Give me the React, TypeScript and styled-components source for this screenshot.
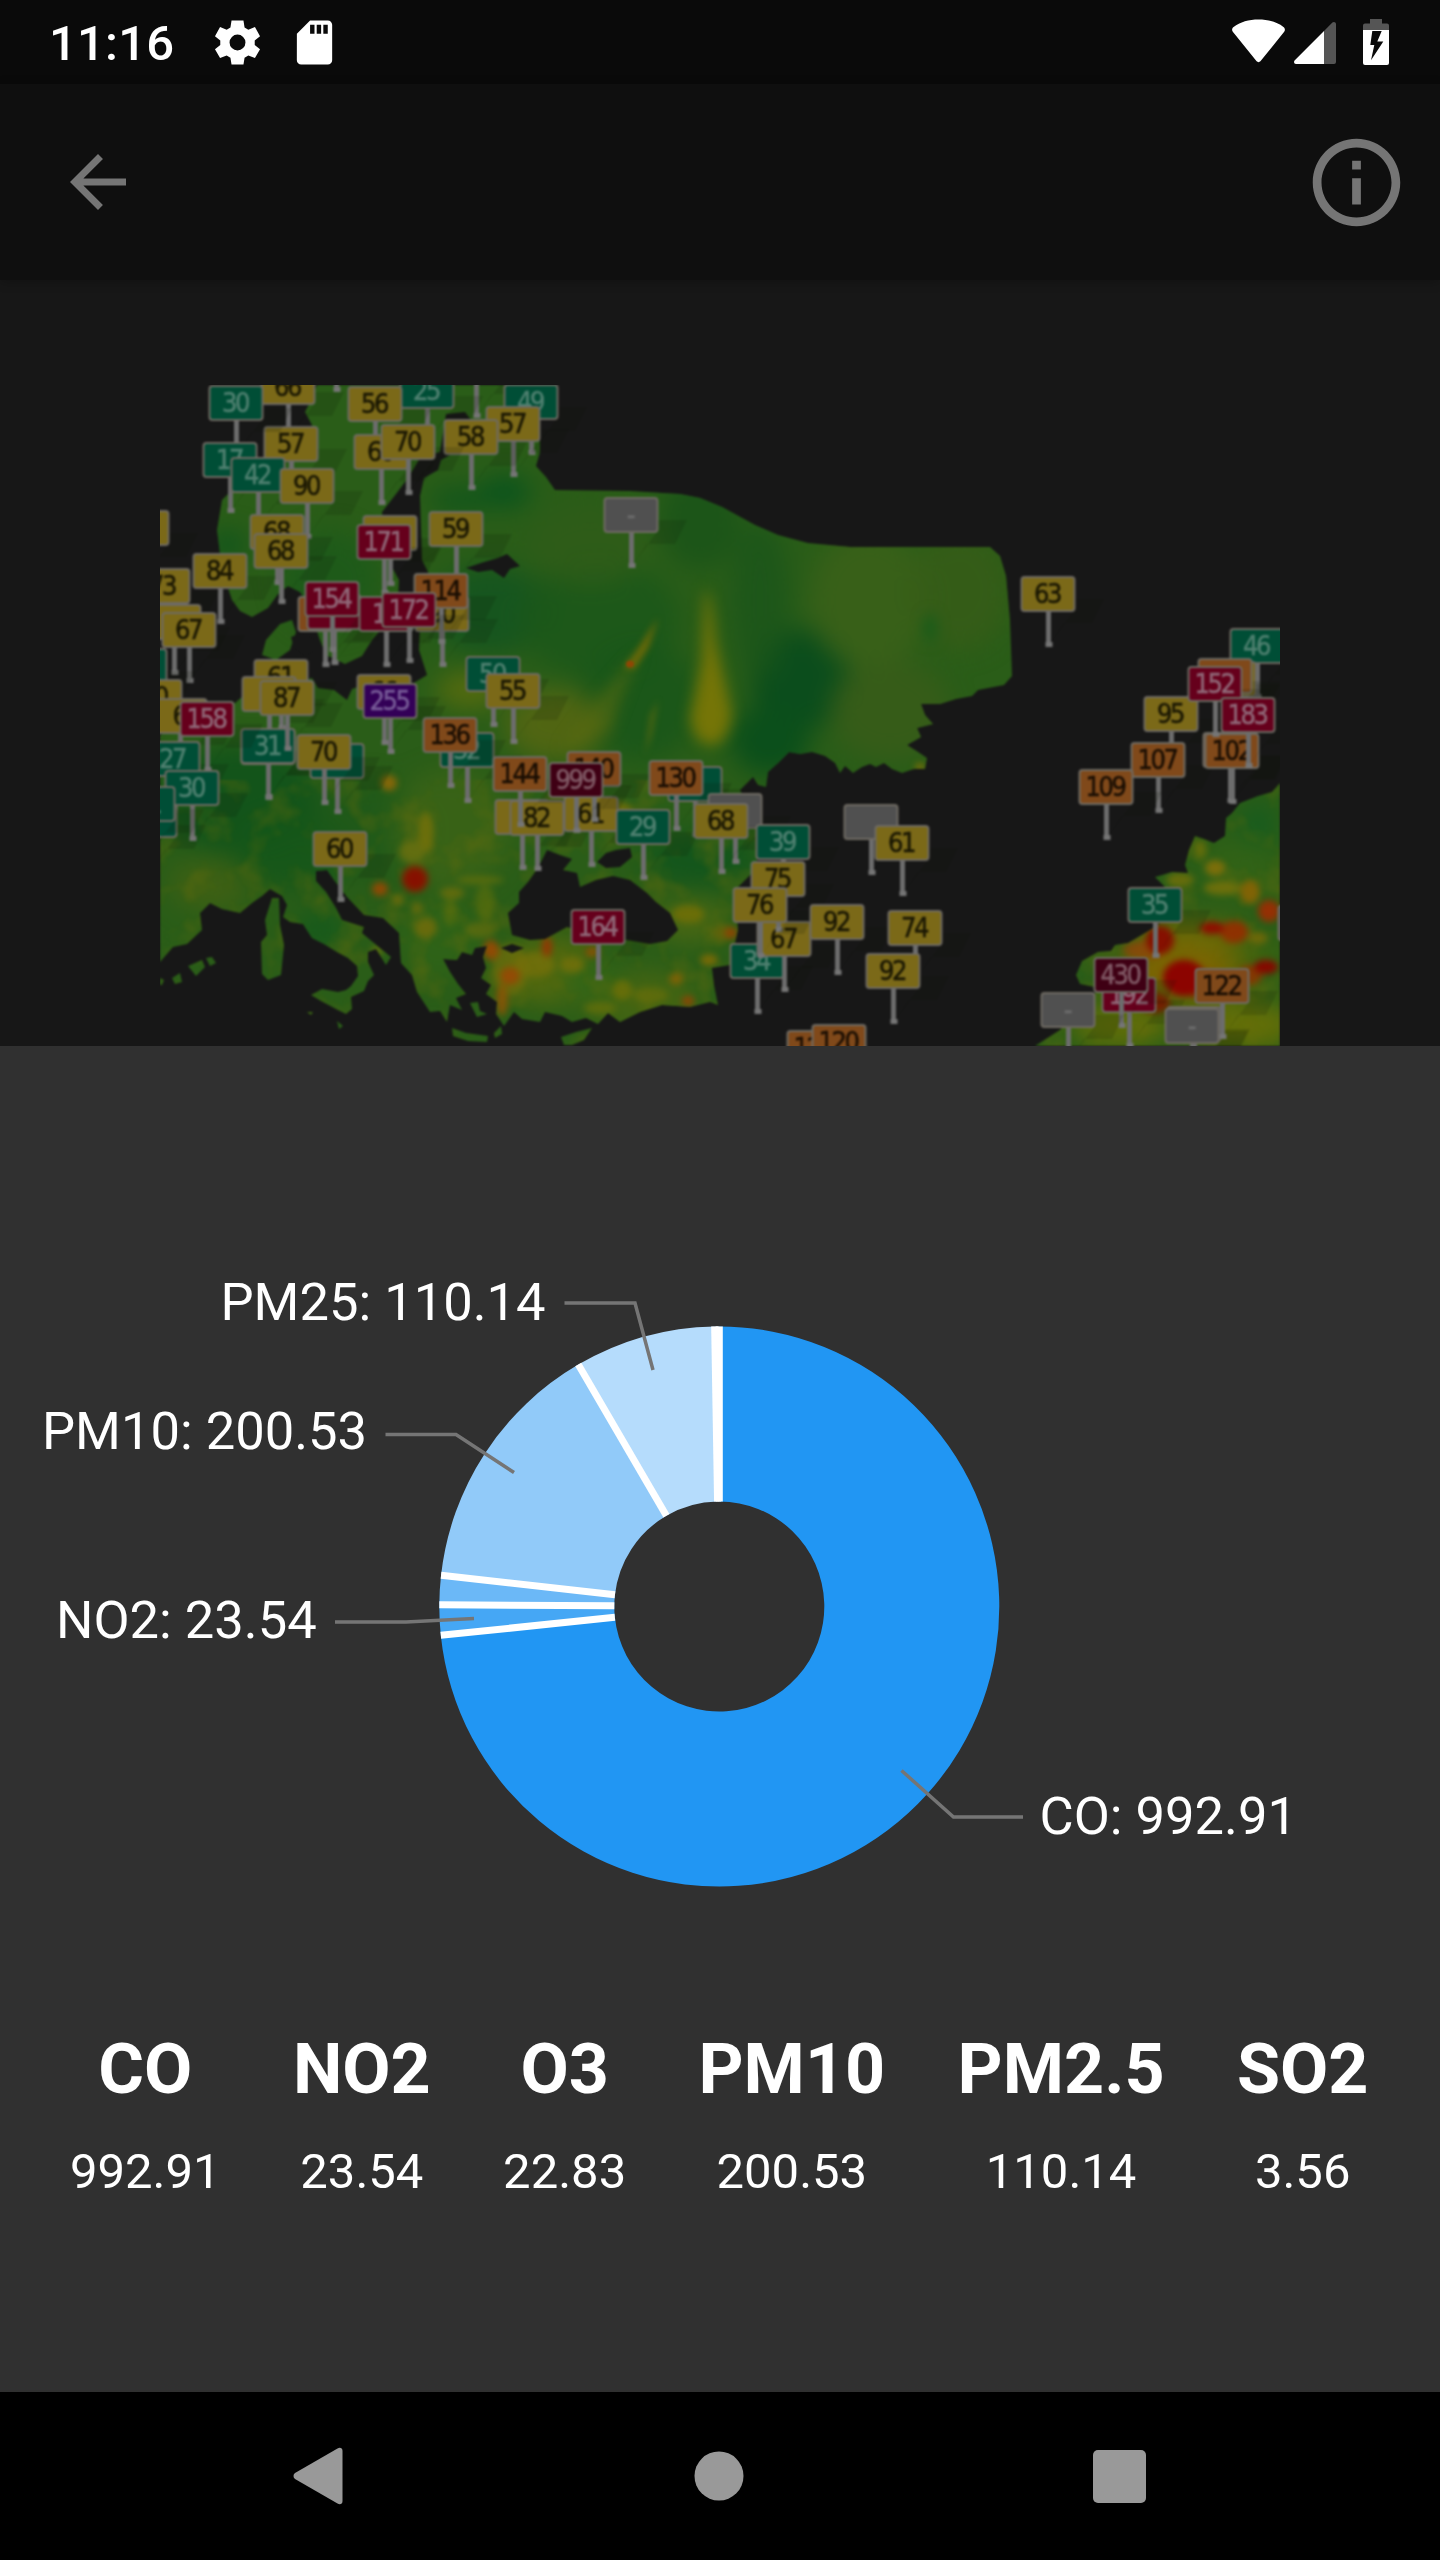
import React from "react";
import styled, { createGlobalStyle } from "styled-components";

const GlobalStyle = createGlobalStyle`
  * { box-sizing: border-box; }
  body { margin: 0; background: #171717; }
`;

const Screen = styled.main`
  display: flex;
  flex-direction: column;
  width: 1440px;
  height: 2560px;
  overflow: hidden;
  background: #171717;
  color: #fff;
  font-family: Roboto, "Noto Sans", sans-serif;
`;

const StatusBar = styled.header`
  display: flex;
  align-items: center;
  justify-content: space-between;
  flex: none;
  height: 84px;
  padding: 0 51px 0 49px;
  background: #0a0a0a;
`;

const StatusGroup = styled.div<{ $gap: number }>`
  display: flex;
  align-items: center;
  gap: ${(p) => p.$gap}px;
`;

const Clock = styled.span`
  width: 138px;
  font-size: 49px;
  font-weight: 500;
  line-height: 57px;
  letter-spacing: 0.2px;
  margin-top: 2px;
`;

const Icon = styled.svg`
  display: block;
  flex: none;
`;

const Cellular = styled.div`
  display: flex;
  gap: 9px;
`;

const AppBar = styled.nav`
  display: flex;
  align-items: center;
  justify-content: space-between;
  flex: none;
  height: 196px;
  padding: 0 31.5px 0 56px;
  background: #0f0f0f;
  box-shadow: 0 2px 10px rgba(0, 0, 0, 0.25);
`;

const IconButton = styled.button`
  display: block;
  padding: 0;
  border: 0;
  background: none;
  color: #757575;
`;

const MapArea = styled.section`
  display: flex;
  justify-content: center;
  flex: none;
  height: 766px;
  padding-top: 105px;
`;

const MapImage = styled.svg`
  display: block;
  width: 1120px;
  height: 661px;
`;

const FlagText = styled.text`
  font-family: "DejaVu Sans Condensed", "DejaVu Sans", sans-serif;
  font-stretch: condensed;
  font-size: 27px;
  letter-spacing: -2.4px;
  text-anchor: middle;
`;

const Sheet = styled.section`
  display: flex;
  flex-direction: column;
  flex: none;
  height: 1346px;
  background: #303030;
`;

const Chart = styled.svg`
  display: block;
  flex: none;
  width: 1440px;
  height: 900px;
`;

const ChartLabel = styled.text`
  fill: #fff;
  font-size: 52.5px;
`;

const Readings = styled.dl`
  display: flex;
  justify-content: space-between;
  margin: 82px 0 0;
  padding: 0 71.5px 0 70px;
`;

const Reading = styled.div`
  display: flex;
  flex-direction: column;
  align-items: center;
  gap: 33px;
`;

const Pollutant = styled.dt`
  font-size: 70px;
  font-weight: 700;
  line-height: 82px;
`;

const Amount = styled.dd`
  margin: 0;
  font-size: 49px;
  line-height: 57px;
`;

const NavBar = styled.footer`
  display: flex;
  justify-content: center;
  flex: none;
  height: 168px;
  padding-right: 2px;
  background: #000;
`;

const NavKey = styled.div`
  display: flex;
  align-items: center;
  justify-content: center;
  width: 400px;

  &:first-child {
    padding-right: 2px;
  }
`;

type Tone = "good" | "moderate" | "sensitive" | "bad" | "severe" | "hazard" | "none";

const tones: Record<Tone, { fill: string; text: string }> = {
  good: { fill: "#004e36", text: "#4f8070" },
  moderate: { fill: "#7b6918", text: "#1a1703" },
  sensitive: { fill: "#80491a", text: "#1a0e03" },
  bad: { fill: "#66001c", text: "#906878" },
  severe: { fill: "#330057", text: "#785c98" },
  hazard: { fill: "#3f0014", text: "#805a66" },
  none: { fill: "#505050", text: "#6c6c6c" },
};

// label, centre x, bottom edge of the flag, tone; listed back to front
const pins: [string, number, number, Tone][] = [
  ["", 336, 356, "moderate"],
  ["", 476, 382, "moderate"],
  ["49", 531, 419, "good"],
  ["25", 427, 408, "good"],
  ["66", 288, 404, "moderate"],
  ["56", 375, 421, "moderate"],
  ["57", 513, 441, "moderate"],
  ["58", 471, 454, "moderate"],
  ["57", 291, 461, "moderate"],
  ["30", 236, 420, "good"],
  ["60", 381, 469, "moderate"],
  ["70", 408, 459, "moderate"],
  ["17", 230, 477, "good"],
  ["42", 258, 492, "good"],
  ["90", 307, 503, "moderate"],
  ["", 142, 545, "moderate"],
  ["68", 277, 549, "moderate"],
  ["68", 281, 568, "moderate"],
  ["84", 220, 588, "moderate"],
  ["", 390, 550, "moderate"],
  ["171", 384, 559, "bad"],
  ["59", 456, 546, "moderate"],
  ["73", 163, 603, "moderate"],
  ["", 174, 639, "moderate"],
  ["67", 189, 647, "moderate"],
  ["", 140, 683, "good"],
  ["90", 442, 631, "moderate"],
  ["114", 441, 608, "sensitive"],
  ["", 325, 631, "sensitive"],
  ["", 334, 629, "bad"],
  ["154", 332, 616, "bad"],
  ["15", 386, 631, "bad"],
  ["172", 409, 627, "bad"],
  ["61", 281, 694, "moderate"],
  ["", 269, 711, "moderate"],
  ["50", 493, 691, "good"],
  ["55", 513, 708, "moderate"],
  ["66", 384, 709, "moderate"],
  ["60", 155, 714, "moderate"],
  ["6", 180, 733, "moderate"],
  ["32", 467, 767, "good"],
  ["", 268, 764, "good"],
  ["31", 268, 763, "good"],
  ["87", 287, 715, "moderate"],
  ["255", 390, 718, "severe"],
  ["27", 173, 776, "good"],
  ["158", 207, 736, "bad"],
  ["", 150, 837, "good"],
  ["30", 192, 805, "good"],
  ["31", 148, 821, "good"],
  ["", 337, 778, "good"],
  ["70", 324, 769, "moderate"],
  ["136", 450, 752, "sensitive"],
  ["", 522, 834, "moderate"],
  ["82", 537, 835, "moderate"],
  ["144", 520, 791, "sensitive"],
  ["61", 591, 831, "moderate"],
  ["140", 594, 786, "sensitive"],
  ["999", 576, 797, "hazard"],
  ["", 695, 801, "good"],
  ["130", 676, 795, "sensitive"],
  ["29", 643, 844, "good"],
  ["", 735, 828, "none"],
  ["68", 721, 838, "moderate"],
  ["60", 340, 866, "moderate"],
  ["39", 783, 859, "good"],
  ["34", 757, 978, "good"],
  ["67", 784, 956, "moderate"],
  ["75", 778, 896, "moderate"],
  ["76", 760, 922, "moderate"],
  ["92", 837, 939, "moderate"],
  ["", 871, 839, "none"],
  ["61", 902, 860, "moderate"],
  ["74", 915, 945, "moderate"],
  ["92", 893, 988, "moderate"],
  ["164", 598, 944, "bad"],
  ["123", 814, 1065, "sensitive"],
  ["120", 839, 1059, "sensitive"],
  ["-", 631, 532, "none"],
  ["63", 1048, 611, "moderate"],
  ["46", 1257, 663, "good"],
  ["", 1229, 696, "moderate"],
  ["", 1225, 693, "sensitive"],
  ["95", 1171, 731, "moderate"],
  ["107", 1158, 777, "sensitive"],
  ["", 1230, 767, "sensitive"],
  ["102", 1232, 768, "sensitive"],
  ["152", 1215, 701, "bad"],
  ["183", 1248, 732, "bad"],
  ["109", 1106, 804, "sensitive"],
  ["", 1305, 940, "none"],
  ["35", 1155, 922, "good"],
  ["192", 1129, 1012, "bad"],
  ["430", 1121, 992, "hazard"],
  ["", 1194, 1041, "none"],
  ["-", 1192, 1043, "none"],
  ["122", 1222, 1003, "sensitive"],
  ["-", 1068, 1027, "none"],
];

const mainland =
  "M317 385 L312 398 L305 412 L312 425 L300 455 L262 475 L240 482 L222 500 L217 530 L222 570 L232 600 L240 611 L252 617 L268 608 L278 594 L288 586 L300 592 L308 604 L320 640 L326 655 L345 664 L362 656 L372 640 L385 625 L400 606 L416 596 L421 600 L419 650 L427 675 L412 684 L400 690 L380 692 L366 684 L352 689 L347 700 L334 690 L318 688 L312 678 L296 682 L285 688 L262 684 L250 690 L235 703 L210 712 L190 725 L160 735 L160 962 L173 947 L187 944 L202 930 L200 913 L210 903 L222 909 L240 913 L252 903 L262 896 L270 889 L282 896 L287 905 L283 917 L290 922 L303 924 L312 938 L324 944 L337 952 L348 958 L357 966 L358 976 L351 986 L346 990 L338 992 L322 989 L311 995 L321 1001 L336 1009 L346 1014 L352 1009 L351 997 L364 991 L368 981 L374 975 L368 962 L368 952 L376 949 L386 965 L391 957 L380 948 L362 933 L364 927 L342 920 L336 908 L326 892 L316 881 L316 871 L327 870 L334 880 L347 897 L364 915 L383 918 L399 933 L401 963 L412 975 L417 992 L430 1012 L440 1011 L447 1022 L450 1005 L462 1010 L456 998 L466 994 L458 984 L450 972 L443 959 L457 960 L462 952 L472 955 L475 948 L487 946 L483 957 L486 968 L481 978 L491 985 L486 994 L497 1002 L496 1014 L504 1026 L514 1012 L522 1019 L540 1022 L545 1012 L562 1016 L572 1022 L586 1018 L598 1024 L608 1013 L620 1022 L640 1012 L662 1005 L690 1007 L710 1002 L718 1005 L714 985 L712 968 L730 965 L738 930 L735 890 L755 870 L762 830 L740 790 L753 777 L758 785 L766 787 L768 772 L778 763 L789 752 L800 754 L812 752 L825 756 L835 763 L840 773 L845 766 L853 773 L862 767 L870 764 L876 767 L884 763 L892 769 L902 773 L914 769 L925 769 L927 758 L918 752 L907 745 L921 737 L917 728 L933 724 L925 715 L921 704 L940 704 L956 699 L972 696 L978 690 L1004 685 L1012 676 L1010 620 L1006 576 L1000 556 L990 547 L850 547 L808 543 L778 535 L755 525 L722 507 L700 498 L680 494 L630 491 L555 490 L546 477 L536 466 L540 452 L540 385 Z";

const southeast =
  "M1280 783 L1272 792 L1258 796 L1240 803 L1232 813 L1226 818 L1225 836 L1214 843 L1204 839 L1195 836 L1189 850 L1185 865 L1188 873 L1172 872 L1155 877 L1165 887 L1180 890 L1176 912 L1150 930 L1140 936 L1128 943 L1115 945 L1111 951 L1098 952 L1082 961 L1076 975 L1080 984 L1100 988 L1060 1030 L1035 1046 L1280 1046 Z";

const islands = [
  "M272 898 L279 898 L280 925 L284 945 L281 975 L268 980 L262 974 L261 942 L267 935 L265 920 Z",
  "M188 966 L202 960 L205 967 L196 976 Z",
  "M206 958 L212 957 L216 963 L210 966 Z",
  "M172 978 L180 973 L182 982 L175 984 Z",
  "M160 978 L164 980 L162 985 L160 985 Z",
  "M452 1028 L466 1033 L488 1036 L487 1042 L468 1041 L453 1036 Z",
  "M494 1033 L501 1026 L502 1034 L495 1038 Z",
  "M561 1037 L576 1032 L592 1028 L584 1040 L572 1045 L564 1045 Z",
  "M470 1003 L478 1002 L480 1011 L487 1014 L477 1017 Z",
  "M307 1012 L313 1012 L311 1015 Z",
  "M337 1021 L343 1026 L339 1029 Z",
  "M266 640 L280 624 L292 620 L296 632 L290 650 L276 660 L262 655 Z",
];

const seas = [
  "M446 414 L465 412 L471 420 L452 440 L450 455 L441 460 L438 470 L424 478 L420 496 L422 560 L432 580 L424 596 L410 610 L398 600 L399 580 L388 560 L382 512 L396 494 L408 478 L420 458 L440 452 Z",
  "M466 568 L484 562 L498 558 L507 554 L520 566 L510 569 L504 578 L492 570 L478 572 Z",
  "M547 850 L538 868 L528 882 L519 892 L519 903 L508 913 L512 935 L530 940 L545 939 L567 927 L600 936 L627 940 L650 944 L667 941 L678 930 L670 913 L656 902 L647 893 L630 880 L613 876 L596 880 L580 887 L577 873 L563 870 L572 859 L560 855 Z",
  "M597 862 L606 853 L616 850 L630 848 L632 857 L620 867 L606 868 Z",
  "M501 948 L512 944 L524 948 L512 953 Z",
  "M291 637 L302 633 L315 640 L316 650 L305 656 L294 648 Z",
];

// centre x, centre y, radius x, radius y, colour, opacity
const softPatches: [number, number, number, number, string, number][] = [
  [505, 492, 26, 16, "#0a541d", 1],
  [460, 500, 30, 12, "#0a541d", 0.8],
  [228, 545, 18, 14, "#0c541d", 0.9],
  [330, 580, 50, 50, "#1c5a1a", 0.8],
  [490, 610, 60, 44, "#115420", 0.8],
  [700, 520, 40, 50, "#1b5418", 0.9],
  [600, 620, 80, 60, "#1c581a", 0.9],
  [640, 700, 60, 60, "#1a561a", 0.9],
  [800, 680, 50, 50, "#0b4d1c", 1],
  [770, 740, 40, 35, "#0b4f1b", 1],
  [760, 600, 30, 80, "#1a551a", 0.8],
  [870, 600, 60, 70, "#3a6018", 0.9],
  [960, 590, 50, 60, "#375c18", 0.8],
  [890, 710, 60, 50, "#375c18", 0.9],
  [555, 725, 50, 36, "#5a6811", 0.8],
  [470, 690, 34, 18, "#66700c", 0.7],
  [590, 545, 60, 40, "#2f5c18", 0.9],
  [240, 800, 80, 55, "#11531b", 0.9],
  [290, 850, 60, 40, "#15571a", 0.9],
  [210, 885, 40, 26, "#3f6014", 0.9],
  [370, 830, 60, 50, "#1c581a", 0.7],
  [320, 930, 26, 20, "#155a1c", 0.9],
  [450, 830, 60, 60, "#3c6416", 0.8],
  [440, 940, 40, 40, "#2f6418", 0.8],
  [700, 860, 60, 28, "#14561c", 1],
  [640, 1000, 60, 30, "#4a6611", 0.8],
  [550, 970, 50, 34, "#5c6c0c", 0.8],
  [590, 980, 30, 18, "#2c6518", 0.9],
  [690, 920, 36, 22, "#4c6813", 0.9],
  [1258, 825, 16, 20, "#125c20", 0.9],
  [1240, 870, 40, 30, "#326316", 0.9],
  [1190, 940, 60, 18, "#806c00", 0.8],
  [1180, 975, 70, 24, "#856500", 0.9],
  [1258, 955, 36, 10, "#3f650f", 1],
  [1240, 1025, 60, 24, "#646f08", 1],
  [1120, 1025, 50, 24, "#646f08", 0.9],
];

const hotPatches: [number, number, number, number, string, number][] = [
  [415, 879, 13, 13, "#861a00", 1],
  [415, 879, 8, 8, "#861000", 1],
  [380, 889, 8, 7, "#8f4a05", 1],
  [389, 783, 8, 8, "#85670a", 1],
  [426, 832, 8, 20, "#77720a", 0.8],
  [412, 852, 13, 11, "#6c7010", 0.8],
  [398, 900, 6, 6, "#6d6b0c", 0.9],
  [417, 908, 6, 6, "#6d6b0c", 0.8],
  [426, 928, 11, 10, "#6d6b0c", 0.9],
  [377, 951, 6, 5, "#6d720c", 0.8],
  [452, 893, 12, 6, "#6b6e0c", 0.8],
  [480, 880, 24, 4, "#66700c", 0.7],
  [450, 912, 7, 14, "#5f700c", 0.6],
  [485, 903, 10, 18, "#5f700c", 0.6],
  [480, 930, 16, 8, "#6f700c", 0.6],
  [535, 965, 20, 12, "#78710a", 0.7],
  [510, 970, 18, 26, "#78700a", 0.6],
  [491, 950, 8, 10, "#914b05", 1],
  [510, 976, 10, 9, "#934c05", 1],
  [502, 1000, 6, 16, "#8b5506", 0.9],
  [547, 947, 5, 10, "#913904", 1],
  [592, 952, 7, 5, "#905004", 0.9],
  [726, 933, 13, 8, "#806404", 0.5],
  [731, 933, 6, 5, "#904204", 1],
  [688, 914, 16, 9, "#6f6f08", 0.9],
  [709, 960, 9, 6, "#806b05", 0.9],
  [676, 979, 7, 6, "#846305", 0.9],
  [688, 1001, 6, 5, "#8e4505", 1],
  [622, 990, 10, 10, "#6f7008", 0.8],
  [572, 965, 12, 8, "#75700a", 0.8],
  [600, 1008, 16, 6, "#6a700a", 0.7],
  [650, 995, 18, 8, "#6a700a", 0.6],
  [560, 800, 14, 10, "#6a700a", 0.6],
  [620, 810, 12, 8, "#75700a", 0.8],
  [920, 767, 5, 4, "#7a6d08", 1],
  [1215, 868, 10, 8, "#84700a", 0.9],
  [1200, 850, 6, 9, "#6e700a", 0.8],
  [1222, 888, 18, 7, "#7c730a", 0.8],
  [1250, 892, 10, 12, "#8a6404", 0.9],
  [1180, 880, 14, 7, "#74700a", 0.8],
  [1269, 911, 11, 11, "#943004", 1],
  [1145, 950, 22, 9, "#94400a", 0.7],
  [1160, 940, 14, 14, "#861000", 1],
  [1234, 932, 14, 11, "#962c00", 0.9],
  [1212, 928, 12, 6, "#900c00", 1],
  [1258, 938, 10, 6, "#7c6a08", 0.8],
  [1207, 985, 24, 14, "#962200", 0.8],
  [1184, 978, 21, 18, "#8c0400", 1],
  [1250, 975, 12, 10, "#923000", 0.8],
  [1266, 967, 12, 7, "#860800", 1],
  [1155, 1003, 15, 10, "#8c1c00", 0.9],
];

function Pin({ label, cx, bottom, tone }: { label: string; cx: number; bottom: number; tone: Tone }) {
  const { fill, text } = tones[tone];
  return (
    <g>
      <path
        d={`M${cx + 4} ${bottom + 30} L${cx + 16} ${bottom + 12} H${cx + 44} L${cx + 56} ${bottom - 12} H${cx + 26} V${bottom}`}
        fill="#0c1404"
        opacity="0.15"
      />
      <line x1={cx + 0.5} x2={cx + 0.5} y1={bottom} y2={bottom + 35} stroke="#6c6c6c" strokeWidth="5" />
      <rect x={cx - 2.5} y={bottom + 31} width="7" height="5" fill="#757575" />
      <rect x={cx - 26.5} y={bottom - 34} width="53" height="34" rx="3" fill={fill} stroke="#6e6a62" strokeWidth="2" />
      {label && (
        <FlagText x={cx - 1} y={bottom - 8} fill={text} stroke={text} strokeWidth="0.5">
          {label}
        </FlagText>
      )}
    </g>
  );
}

function AirQualityMap() {
  return (
    <MapImage viewBox="160 385 1120 661" aria-label="Air quality map">
      <defs>
        <clipPath id="land">
          <path d={mainland} />
          <path d={southeast} />
          {islands.map((d) => (
            <path key={d} d={d} />
          ))}
        </clipPath>
        <filter id="soft" x="-50%" y="-50%" width="200%" height="200%" colorInterpolationFilters="sRGB">
          <feGaussianBlur stdDeviation="12" />
        </filter>
        <filter id="warm" x="-50%" y="-50%" width="200%" height="200%" colorInterpolationFilters="sRGB">
          <feGaussianBlur stdDeviation="3" />
        </filter>
        <filter id="plume" x="-50%" y="-20%" width="200%" height="140%" colorInterpolationFilters="sRGB">
          <feGaussianBlur stdDeviation="7" />
        </filter>
        <filter id="mottle" x="0" y="0" width="100%" height="100%" colorInterpolationFilters="sRGB">
          <feTurbulence type="fractalNoise" baseFrequency="0.03" numOctaves="3" seed="7" />
          <feColorMatrix values="0 0 0 0 0.42  0 0 0 0 0.43  0 0 0 0 0.05  0 2.4 0 0 -1.15" />
        </filter>
        <filter id="resample" x="0" y="0" width="100%" height="100%" colorInterpolationFilters="sRGB">
          <feGaussianBlur stdDeviation="1.1" />
        </filter>
      </defs>
      <g filter="url(#resample)">
        <rect x="150" y="375" width="1140" height="681" fill="#171717" />
        <g clipPath="url(#land)">
          <rect x="160" y="385" width="1120" height="661" fill="#2a5d18" />
          <g filter="url(#soft)">
            {softPatches.map(([x, y, rx, ry, fill, opacity], i) => (
              <ellipse key={i} cx={x} cy={y} rx={rx} ry={ry} fill={fill} opacity={opacity} />
            ))}
          </g>
          <rect x="160" y="780" width="600" height="266" filter="url(#mottle)" opacity="0.45" />
          <rect x="1030" y="780" width="250" height="266" filter="url(#mottle)" opacity="0.45" />
          <g filter="url(#plume)">
            <path d="M705 590 Q711 590 715 640 L732 715 Q726 745 712 745 Q694 745 690 718 L702 660 Z" fill="#757507" />
            <path d="M560 750 L600 695 L640 650 L610 730 Z" fill="#5e6b10" opacity="0.5" />
            <ellipse cx="930" cy="628" rx="6" ry="14" fill="#145c1b" />
          </g>
          <g filter="url(#warm)">
            {hotPatches.map(([x, y, rx, ry, fill, opacity], i) => (
              <ellipse key={i} cx={x} cy={y} rx={rx} ry={ry} fill={fill} opacity={opacity} />
            ))}
            <path d="M624 668 L638 649 L658 618 L648 648 L634 669 Z" fill="#6f6a08" />
            <path d="M645 755 L650 715 L658 700 L652 735 Z" fill="#566812" opacity="0.8" />
          </g>
          <ellipse cx="630" cy="664" rx="4" ry="3.5" fill="#8f4704" />
        </g>
        {seas.map((d) => (
          <path key={d} d={d} fill="#171717" />
        ))}
        {pins.map(([label, cx, bottom, tone], i) => (
          <Pin key={i} label={label} cx={cx} bottom={bottom} tone={tone} />
        ))}
      </g>
    </MapImage>
  );
}

const readings = [
  { name: "CO", value: 992.91, color: "#2196f3" },
  { name: "NO2", value: 23.54, color: "#45a7f5" },
  { name: "O3", value: 22.83, color: "#6bb8f7" },
  { name: "PM10", value: 200.53, color: "#91caf9" },
  { name: "PM2.5", value: 110.14, color: "#b5dcfc" },
  { name: "SO2", value: 3.56, color: "#d9edfd" },
];

const callouts = [
  { text: "PM25: 110.14", x: 220.5, y: 1320, line: "564.5,1303 635,1303 653,1370" },
  { text: "PM10: 200.53", x: 42, y: 1449, line: "385.5,1434.5 456,1434.5 514,1472.5" },
  { text: "NO2: 23.54", x: 56, y: 1638, line: "335,1622 406,1622 474,1618.5" },
  { text: "CO: 992.91", x: 1039.5, y: 1834, line: "901.5,1770.5 953.5,1817 1023,1817" },
];

const centre = { x: 719.3, y: 1606.5 };
const outer = 280;
const inner = 105;

const polar = (radius: number, turn: number) => {
  const a = turn * 2 * Math.PI;
  return `${centre.x + radius * Math.sin(a)} ${centre.y - radius * Math.cos(a)}`;
};

function DonutChart() {
  const total = readings.reduce((sum, r) => sum + r.value, 0);
  let turn = 0;
  const slices = readings.map((r) => {
    const start = turn;
    turn += r.value / total;
    return { ...r, start, end: turn, large: turn - start > 0.5 ? 1 : 0 };
  });
  return (
    <Chart viewBox="0 1046 1440 900">
      {slices.map((s) => (
        <path
          key={s.name}
          fill={s.color}
          d={`M${polar(outer, s.start)} A${outer} ${outer} 0 ${s.large} 1 ${polar(outer, s.end)} L${polar(inner, s.end)} A${inner} ${inner} 0 ${s.large} 0 ${polar(inner, s.start)} Z`}
        />
      ))}
      {slices.map((s) => (
        <path key={s.name} stroke="#fff" strokeWidth="7" d={`M${polar(inner, s.start)} L${polar(outer, s.start)}`} />
      ))}
      {callouts.map((c) => (
        <g key={c.text}>
          <polyline points={c.line} fill="none" stroke="#757575" strokeWidth="3.5" />
          <ChartLabel x={c.x} y={c.y}>
            {c.text}
          </ChartLabel>
        </g>
      ))}
    </Chart>
  );
}

export default function App() {
  return (
    <Screen>
      <GlobalStyle />
      <StatusBar>
        <StatusGroup $gap={24}>
          <Clock>11:16</Clock>
          <Icon width="53" height="53" viewBox="0 0 24 24" fill="#fff">
            <path
              fillRule="evenodd"
              d="M9.3 2h5.4l.5 3.2 1.7 1 3-1.2 2.3 4.2-2.4 1.9v2l2.4 1.9-2.3 4-3-1.1-1.7 1-.5 3.1H9.3l-.5-3.1-1.7-1-3 1.1-2.3-4 2.4-1.9v-2L1.8 9.2l2.3-4.2 3 1.2 1.7-1zM12 8.4a3.6 3.6 0 1 0 0 7.2 3.6 3.6 0 1 0 0-7.2z"
            />
          </Icon>
          <Icon width="53" height="53" viewBox="0 0 24 24" fill="#fff">
            <path d="M18 2h-8L4.02 8 4 20c0 1.1.9 2 2 2h12c1.1 0 2-.9 2-2V4c0-1.1-.9-2-2-2zm-6 6h-2V4h2v4zm3 0h-2V4h2v4zm3 0h-2V4h2v4z" />
          </Icon>
        </StatusGroup>
        <StatusGroup $gap={27}>
          <Cellular>
            <Icon width="53" height="56" viewBox="0 0 53 56" fill="#fff">
              <path d="M24.6 47.3 L.8 17.8 C-.4 16 0 14 1.6 12.9 C8 8 17 5.5 26.5 5.5 S45 8 51.4 12.9 C53 14 53.4 16 52.2 17.8 L28.4 47.3 C27.4 48.4 25.6 48.4 24.6 47.3Z" />
            </Icon>
            <Icon width="42" height="56" viewBox="0 0 42 56">
              <path fill="#555" d="M30 17 L38.4 8.6 C39.6 7.4 42 8 42 10 V48 a2 2 0 0 1 -2 2 H30 Z" />
              <path fill="#fff" d="M30 17 L.8 46.2 C-.6 47.6 0 50 2 50 H30 Z" />
            </Icon>
          </Cellular>
          <Icon width="26" height="56" viewBox="0 0 26 56">
            <path fill="#555" d="M7 5h12v4.5h5a2 2 0 0 1 2 2V16H0v-4.5a2 2 0 0 1 2-2h5z" />
            <path fill="#fff" d="M0 16h26v33a2 2 0 0 1-2 2H2a2 2 0 0 1-2-2z" />
            <path fill="#0a0a0a" d="M9.3 17H18.7L14.3 27.5H20.3L8 46.3 11.3 31H7.3z" />
          </Icon>
        </StatusGroup>
      </StatusBar>
      <AppBar>
        <IconButton aria-label="Back">
          <Icon width="84" height="84" viewBox="0 0 24 24" fill="currentColor">
            <path d="M20 11H7.83l5.59-5.59L12 4l-8 8 8 8 1.41-1.41L7.83 13H20v-2z" />
          </Icon>
        </IconButton>
        <IconButton aria-label="Info">
          <Icon width="105" height="105" viewBox="0 0 24 24" fill="currentColor">
            <path d="M11 7h2v2h-2zm0 4h2v6h-2zm1-9C6.48 2 2 6.48 2 12s4.48 10 10 10 10-4.48 10-10S17.52 2 12 2zm0 18c-4.41 0-8-3.59-8-8s3.59-8 8-8 8 3.59 8 8-3.59 8-8 8z" />
          </Icon>
        </IconButton>
      </AppBar>
      <MapArea>
        <AirQualityMap />
      </MapArea>
      <Sheet>
        <DonutChart />
        <Readings>
          {readings.map((r) => (
            <Reading key={r.name}>
              <Pollutant>{r.name}</Pollutant>
              <Amount>{r.value}</Amount>
            </Reading>
          ))}
        </Readings>
      </Sheet>
      <NavBar>
        <NavKey>
          <Icon width="50" height="58" viewBox="0 0 50 58" fill="#999">
            <path d="M2 26 L44.5 1.4 C47 0 49.5 1 49.5 4 V54 C49.5 57 47 58 44.5 56.6 L2 32 C0 30.5 0 27.5 2 26z" />
          </Icon>
        </NavKey>
        <NavKey>
          <Icon width="50" height="50" viewBox="0 0 50 50" fill="#999">
            <circle cx="25" cy="25" r="24.5" />
          </Icon>
        </NavKey>
        <NavKey>
          <Icon width="53" height="53" viewBox="0 0 53 53" fill="#999">
            <rect width="53" height="53" rx="5" />
          </Icon>
        </NavKey>
      </NavBar>
    </Screen>
  );
}
